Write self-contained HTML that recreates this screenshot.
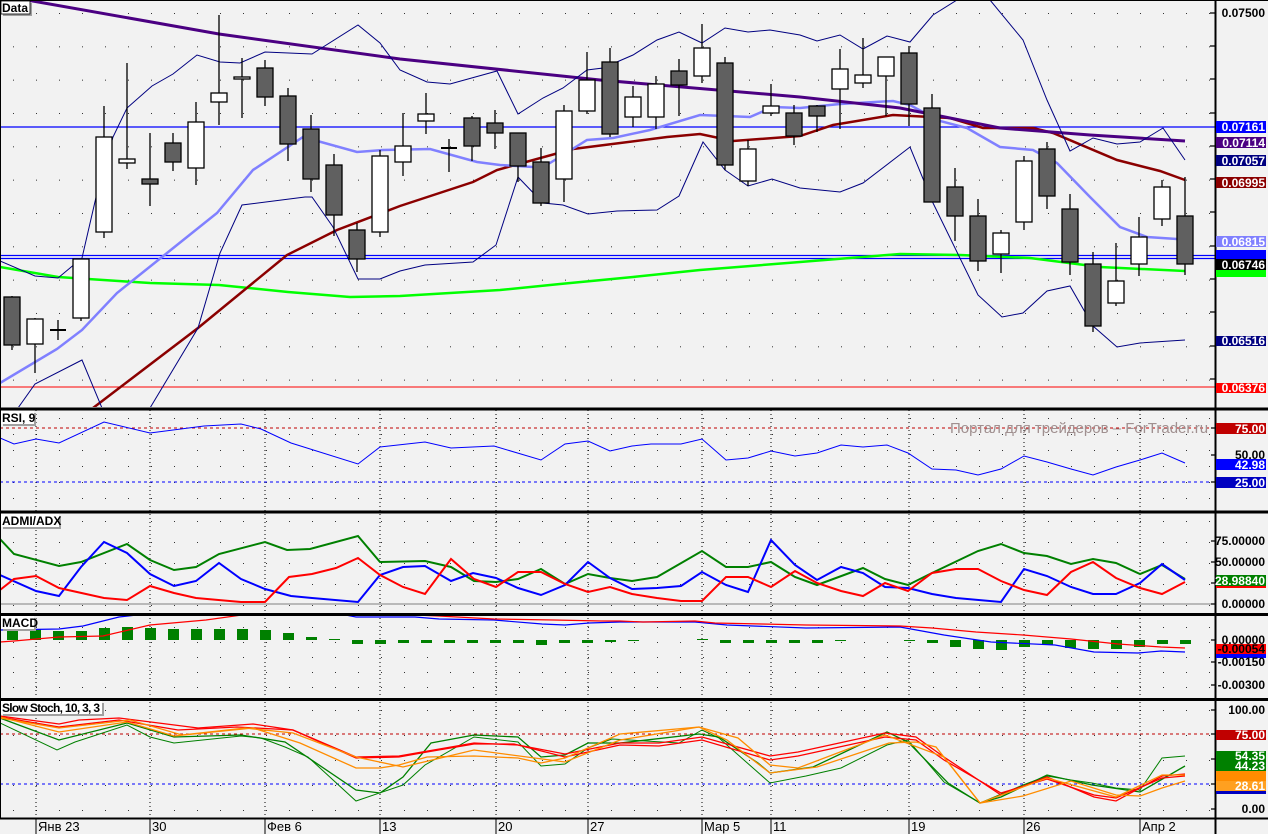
<!DOCTYPE html>
<html><head><meta charset="utf-8"><style>
html,body{margin:0;padding:0;background:#f2f2f2;}
svg{display:block;}
.ax{font-family:"Liberation Sans",sans-serif;font-size:12px;font-weight:bold;}
.lb{font-family:"Liberation Sans",sans-serif;font-size:12px;font-weight:bold;fill:#fff;}
.pl{font-family:"Liberation Sans",sans-serif;font-size:12px;font-weight:bold;fill:#000;}
.tl{font-family:"Liberation Sans","DejaVu Sans",sans-serif;font-size:13px;fill:#000;}
</style></head><body>
<svg width="1268" height="834" viewBox="0 0 1268 834" xmlns="http://www.w3.org/2000/svg">
<defs>
<pattern id="dm" x="13" y="13" width="23" height="33.33" patternUnits="userSpaceOnUse"><rect width="1" height="1" fill="#333"/></pattern>
<pattern id="dr" x="13" y="418" width="23" height="16" patternUnits="userSpaceOnUse"><rect width="1" height="1" fill="#333"/></pattern>
<pattern id="da" x="13" y="521" width="23" height="21" patternUnits="userSpaceOnUse"><rect width="1" height="1" fill="#333"/></pattern>
<pattern id="dc" x="13" y="627" width="23" height="15" patternUnits="userSpaceOnUse"><rect width="1" height="1" fill="#333"/></pattern>
<pattern id="ds" x="13" y="710" width="23" height="25" patternUnits="userSpaceOnUse"><rect width="1" height="1" fill="#333"/></pattern>
<clipPath id="cm"><rect x="0" y="0" width="1215" height="407"/></clipPath>
<clipPath id="cr"><rect x="0" y="410" width="1215" height="100"/></clipPath>
<clipPath id="ca"><rect x="0" y="513" width="1215" height="100"/></clipPath>
<clipPath id="cc"><rect x="0" y="616" width="1215" height="82"/></clipPath>
<clipPath id="cs"><rect x="0" y="701" width="1215" height="116"/></clipPath>
</defs>
<rect width="1268" height="834" fill="#f2f2f2"/>
<rect x="0" y="0" width="1215" height="407" fill="url(#dm)"/>
<rect x="0" y="410" width="1215" height="100" fill="url(#dr)"/>
<rect x="0" y="513" width="1215" height="100" fill="url(#da)"/>
<rect x="0" y="616" width="1215" height="82" fill="url(#dc)"/>
<rect x="0" y="701" width="1215" height="116" fill="url(#ds)"/>

<g stroke="#000" stroke-width="1" stroke-dasharray="1,3">
<path d="M36 410V818M150 410V818M265 410V818M380 410V818M496 410V818M588 410V818M702 410V818M771 410V818M909 410V818M1024 410V818M1140 410V818"/>
</g>

<!-- MAIN -->
<g clip-path="url(#cm)">
<path d="M0 127H1215" stroke="#0000ff" stroke-width="1.3"/>
<path d="M0 255.5H1215M0 258.5H1215" stroke="#0000ff" stroke-width="1.3"/>
<path d="M0 387H1215" stroke="#ff0000" stroke-width="1"/>
<polyline fill="none" stroke="#00ff00" stroke-width="2.5" points="0,267 58,277 150,283 219,285 288,292 350,297 400,296 500,290 560,284 633,277 700,270 800,262 900,254 960,255 1030,258 1100,267 1185,271"/>
<polyline fill="none" stroke="#8b0000" stroke-width="2.5" points="93,408 198,328 287,255 337,230 400,206 473,182 497,170 573,149 667,137 700,134 733,141 800,136 833,125 893,115 950,118 983,128 1033,128 1053,133 1117,160 1160,171 1185,180"/>
<polyline fill="none" stroke="#8080ff" stroke-width="2.5" points="0,383 57,349 82,330 117,293 167,253 217,213 253,170 303,137 357,152 383,150 430,149 477,162 500,165 533,167 550,163 587,140 613,138 650,130 700,115 750,117 773,107 800,108 840,104 893,101 910,105 940,121 967,128 1000,147 1033,150 1057,163 1090,197 1120,227 1147,237 1177,239"/>
<polyline fill="none" stroke="#4b0082" stroke-width="3" points="27,0 219,34 400,59 600,80 800,97 900,108 1000,128 1090,135 1185,141"/>
<polyline fill="none" stroke="#000080" stroke-width="1" points="0,261 35,276 58,278 82,258 97,193 113,137 127,108 152,86 173,74 197,55 220,62 240,63 265,52 312,54 358,25 380,43 400,70 427,82 450,84 497,71 518,114 543,98 563,88 587,70 603,68 633,55 657,40 679,32 702,43 725,28 748,32 770,30 800,35 817,41 840,35 863,49 887,36 910,42 933,15 957,0 975,-6 990,0 1023,40 1047,100 1070,151 1093,138 1117,144 1140,142 1163,128 1185,160"/>
<polyline fill="none" stroke="#000080" stroke-width="1" points="18,408 35,384 82,360 102,408 150,408 198,328 220,253 242,205 305,197 312,197 333,227 358,279 380,279 400,271 425,265 473,262 496,245 518,177 543,203 563,205 588,214 617,211 657,210 679,196 703,142 725,170 748,186 772,179 800,188 840,192 863,183 910,147 933,203 978,295 1002,317 1023,313 1047,291 1070,286 1093,326 1117,347 1140,343 1185,340"/>
<g stroke="#000" stroke-width="1.3">
<path d="M12 296V350M35 318V373M58 320V340M81 259V321M104 106V238M127 63V169M150 133V206M173 133V171M196 102V185M219 15V125M242 58V118M265 60V106M288 88V161M311 115V192M334 154V236M357 223V272M380 150V237M403 113V176M426 93V134M449 139V172M472 116V161M495 110V149M518 133V182M541 148V206M564 105V202M587 52V114M610 48V137M633 86V127M656 76V129M679 59V116M702 24V83M725 57V170M748 140V186M771 84V116M794 105V145M817 105V132M840 49V129M863 38V88M886 57V116M909 46V126M932 94V202M955 168V241M978 199V271M1001 230V273M1024 156V230M1047 142V209M1070 194V275M1093 252V332M1116 243V306M1139 217V276M1162 180V226M1185 177V275"/>
<path d="M50 330H66M441 148H457" stroke-width="2"/>
</g>
<g stroke="#000" stroke-width="1.3">
<g fill="#606060">
<rect x="4" y="297" width="16" height="48"/><rect x="142" y="179" width="16" height="5"/><rect x="165" y="143" width="16" height="19"/>
<rect x="257" y="68" width="16" height="29"/><rect x="280" y="96" width="16" height="48"/><rect x="303" y="129" width="16" height="50"/>
<rect x="326" y="165" width="16" height="50"/><rect x="349" y="230" width="16" height="29"/><rect x="464" y="118" width="16" height="28"/>
<rect x="487" y="123" width="16" height="10"/><rect x="510" y="133" width="16" height="33"/><rect x="533" y="162" width="16" height="41"/>
<rect x="602" y="62" width="16" height="72"/><rect x="671" y="71" width="16" height="14"/><rect x="717" y="63" width="16" height="102"/>
<rect x="786" y="113" width="16" height="23"/><rect x="809" y="106" width="16" height="10"/><rect x="901" y="53" width="16" height="51"/>
<rect x="924" y="108" width="16" height="94"/><rect x="947" y="187" width="16" height="29"/><rect x="970" y="216" width="16" height="45"/>
<rect x="1039" y="149" width="16" height="47"/><rect x="1062" y="209" width="16" height="53"/><rect x="1085" y="264" width="16" height="62"/>
<rect x="1177" y="216" width="16" height="48"/>
</g>
<g fill="#fff">
<rect x="27" y="319" width="16" height="25"/><rect x="73" y="259" width="16" height="59"/><rect x="96" y="137" width="16" height="95"/>
<rect x="119" y="159" width="16" height="4"/><rect x="188" y="122" width="16" height="46"/><rect x="211" y="93" width="16" height="9"/>
<rect x="234" y="77" width="16" height="2"/><rect x="372" y="156" width="16" height="76"/><rect x="395" y="146" width="16" height="16"/>
<rect x="418" y="114" width="16" height="7"/><rect x="556" y="111" width="16" height="68"/><rect x="579" y="80" width="16" height="31"/>
<rect x="625" y="97" width="16" height="20"/><rect x="648" y="84" width="16" height="33"/><rect x="694" y="48" width="16" height="28"/>
<rect x="740" y="149" width="16" height="32"/><rect x="763" y="106" width="16" height="7"/><rect x="832" y="69" width="16" height="20"/>
<rect x="855" y="75" width="16" height="8"/><rect x="878" y="57" width="16" height="19"/><rect x="993" y="233" width="16" height="21"/>
<rect x="1016" y="161" width="16" height="61"/><rect x="1108" y="281" width="16" height="22"/><rect x="1131" y="237" width="16" height="27"/>
<rect x="1154" y="187" width="16" height="32"/>
</g>
</g>
</g>

<!-- RSI -->
<g clip-path="url(#cr)">
<path d="M0 428H1215" stroke="#c00000" stroke-dasharray="3,3"/>
<path d="M0 482H1215" stroke="#0000ff" stroke-dasharray="3,3"/>
<text x="950" y="433" font-family="Liberation Sans, DejaVu Sans, sans-serif" font-size="15" fill="#a09090">Портал для трейдеров – ForTrader.ru</text>
<polyline fill="none" stroke="#0000ff" stroke-width="1" points="0,438 14,444 36,439 59,443 104,422 150,433 204,426 241,424 261,429 291,443 358,464 380,447 425,442 451,448 494,446 541,460 565,444 588,441 610,451 632,446 651,444 681,444 702,439 726,460 748,458 771,451 795,456 817,453 841,445 863,447 887,445 908,453 932,469 956,470 978,475 1001,469 1024,456 1047,462 1071,469 1093,475 1116,467 1140,460 1162,453 1185,463"/>
</g>

<!-- ADX -->
<g clip-path="url(#ca)">
<path d="M0 604H1215" stroke="#808080" stroke-width="1"/>
<polyline fill="none" stroke="#008000" stroke-width="2" points="0,539 14,554 59,566 81,562 127,544 150,560 174,570 196,567 219,554 265,542 287,550 310,549 358,536 380,562 425,561 451,567 474,581 496,582 518,579 541,569 565,584 588,574 610,578 632,581 657,577 702,551 726,567 748,567 771,562 795,577 817,585 863,568 885,579 908,585 932,573 978,551 1001,544 1024,553 1047,556 1071,564 1093,559 1116,563 1140,574 1162,565 1185,579"/>
<polyline fill="none" stroke="#0000ff" stroke-width="2" points="0,575 36,591 59,596 81,567 104,542 127,553 150,574 174,586 196,581 219,563 241,579 265,589 291,596 312,598 358,602 380,575 403,567 425,566 451,581 473,573 496,578 518,588 541,595 565,585 588,562 610,578 632,589 657,588 681,586 702,572 726,585 748,592 771,540 795,565 817,580 841,567 863,573 885,587 908,588 932,594 956,598 1001,602 1024,569 1047,576 1071,587 1093,594 1116,594 1140,583 1162,564 1185,580"/>
<polyline fill="none" stroke="#ff0000" stroke-width="2" points="0,590 14,579 36,576 59,588 104,598 127,600 150,586 174,593 196,598 241,602 265,602 289,577 312,574 336,568 358,558 380,575 403,587 425,594 451,559 474,579 496,587 518,572 541,572 565,584 588,592 610,587 632,594 657,598 681,601 702,601 726,577 748,577 771,587 795,571 817,583 841,591 863,596 885,583 908,591 932,573 956,569 978,569 1001,581 1024,590 1047,595 1071,572 1093,562 1116,578 1140,588 1162,594 1185,582"/>
</g>

<!-- MACD -->
<g clip-path="url(#cc)">
<g fill="#008000">
<rect x="7" y="629" width="11" height="11"/><rect x="30" y="629" width="11" height="11"/><rect x="53" y="631" width="11" height="9"/><rect x="76" y="631" width="11" height="9"/>
<rect x="99" y="628" width="11" height="12"/><rect x="122" y="627" width="11" height="13"/><rect x="145" y="628" width="11" height="12"/><rect x="168" y="629" width="11" height="11"/>
<rect x="191" y="629" width="11" height="11"/><rect x="214" y="629" width="11" height="11"/><rect x="237" y="629" width="11" height="11"/><rect x="260" y="630" width="11" height="10"/>
<rect x="283" y="633" width="11" height="7"/><rect x="306" y="637" width="11" height="3"/><rect x="329" y="639" width="11" height="1"/>
<rect x="352" y="640" width="11" height="4"/><rect x="375" y="640" width="11" height="4"/><rect x="398" y="640" width="11" height="3"/><rect x="421" y="640" width="11" height="3"/>
<rect x="444" y="640" width="11" height="3"/><rect x="467" y="640" width="11" height="3"/><rect x="490" y="640" width="11" height="3"/><rect x="513" y="640" width="11" height="3"/>
<rect x="536" y="640" width="11" height="5"/><rect x="559" y="640" width="11" height="3"/><rect x="582" y="640" width="11" height="3"/><rect x="605" y="640" width="11" height="2"/>
<rect x="628" y="640" width="11" height="1"/><rect x="697" y="639" width="11" height="1"/><rect x="720" y="640" width="11" height="3"/><rect x="743" y="640" width="11" height="3"/>
<rect x="766" y="640" width="11" height="3"/><rect x="789" y="640" width="11" height="3"/><rect x="812" y="640" width="11" height="3"/><rect x="835" y="640" width="11" height="1"/>
<rect x="904" y="640" width="11" height="1"/><rect x="927" y="640" width="11" height="3"/><rect x="950" y="640" width="11" height="7"/><rect x="973" y="640" width="11" height="9"/>
<rect x="996" y="640" width="11" height="10"/><rect x="1019" y="640" width="11" height="7"/><rect x="1042" y="640" width="11" height="5"/><rect x="1065" y="640" width="11" height="8"/>
<rect x="1088" y="640" width="11" height="9"/><rect x="1111" y="640" width="11" height="9"/><rect x="1134" y="640" width="11" height="7"/><rect x="1157" y="640" width="11" height="4"/>
<rect x="1180" y="640" width="11" height="4"/>
</g>
<polyline fill="none" stroke="#0000ff" stroke-width="1.2" points="0,630 59,629 83,626 119,617 146,614 160,612 330,612 356,617 415,617 439,619 494,620 542,624 565,625 589,623 620,622 695,622 727,625 806,628 900,627 944,635 991,642 1055,645 1094,652 1138,653 1161,651 1185,652"/>
<polyline fill="none" stroke="#ff0000" stroke-width="1.2" points="0,642 14,641 59,637 103,636 150,625 206,620 249,614 260,612 380,612 415,615 439,616 494,619 554,620 601,621 620,621 643,622 695,621 715,623 762,624 806,625 900,626 932,628 976,632 1023,635 1071,639 1118,644 1161,647 1185,648"/>
</g>

<!-- STOCH -->
<g clip-path="url(#cs)">
<path d="M0 734H1215" stroke="#c00000" stroke-dasharray="3,3"/>
<path d="M0 784H1215" stroke="#0000ff" stroke-dasharray="3,3"/>
<polyline fill="none" stroke="#008000" stroke-width="1" points="0,723 57,750 75,742 127,725 150,737 174,743 241,736 261,738 285,747 308,757 356,801 403,785 425,765 474,737 518,742 541,766 565,764 588,748 609,740 612,739 679,743 702,730 719,738 770,783 806,776 841,768 887,745 908,740 944,782 980,803 1023,785 1047,776 1071,780 1092,783 1116,788 1140,790 1162,758 1185,756"/>
<polyline fill="none" stroke="#008000" stroke-width="1.3" points="0,718 59,740 127,723 174,737 241,735 285,742 356,790 380,793 403,777 431,743 474,735 518,737 541,757 565,755 588,743 620,743 699,734 719,737 758,763 770,773 813,767 887,732 908,742 948,783 980,803 1001,797 1047,775 1092,785 1140,792 1185,766"/>
<polyline fill="none" stroke="#ff0000" stroke-width="1.3" points="0,716 59,724 79,720 119,718 198,728 253,724 293,730 356,757 399,756 474,743 518,745 565,754 620,743 659,743 702,737 770,756 798,752 885,733 916,737 944,757 1001,795 1047,777 1094,797 1116,801 1162,776 1185,774"/>
<polyline fill="none" stroke="#ff0000" stroke-width="1.3" points="0,717 59,727 119,720 178,730 237,727 293,730 356,758 399,757 427,752 474,744 514,744 565,757 620,745 659,746 702,740 770,760 798,756 885,737 916,740 944,760 1001,793 1047,779 1094,795 1116,798 1162,778 1185,776"/>
<polyline fill="none" stroke="#ff8c00" stroke-width="1.3" points="0,717 59,732 127,722 174,736 253,728 300,743 356,768 380,768 399,765 427,757 474,756 518,758 541,763 565,758 620,734 699,727 727,740 770,773 817,767 889,743 916,742 936,747 980,803 1023,796 1071,781 1116,795 1140,796 1162,788 1185,781"/>
<polyline fill="none" stroke="#ff8c00" stroke-width="1.3" points="0,718 59,728 130,720 182,735 245,728 293,733 356,757 403,767 474,750 565,762 620,740 699,727 738,738 770,765 798,768 885,735 944,757 980,803 1047,778 1116,797 1162,775 1185,775"/>
</g>

<!-- frame -->
<g stroke="#000">
<path d="M0 0.5H1268M0.5 0V818" stroke-width="1"/>
<path d="M1215.5 0V834" stroke-width="2"/>
<path d="M0 409H1268M0 512H1268M0 614.5H1268M0 699.5H1268" stroke-width="3"/>
<path d="M0 818.5H1268" stroke-width="2"/>
<path d="M36 818V834M150 818V834M265 818V834M380 818V834M496 818V834M588 818V834M702 818V834M771 818V834M909 818V834M1024 818V834M1140 818V834" stroke-width="1"/>
<path d="M1210 13H1215M1210 46H1215M1210 79H1215M1210 113H1215M1210 146H1215M1210 179H1215M1210 212H1215M1210 246H1215M1210 279H1215M1210 312H1215M1210 346H1215M1210 379H1215" stroke-width="1.3"/>
<path d="M1211 428H1215M1211 455H1215M1211 482H1215M1211 541H1215M1211 562H1215M1211 583H1215M1211 604H1215M1211 640H1215M1211 662H1215M1211 685H1215M1211 710H1215M1211 734H1215M1211 759H1215M1211 784H1215M1211 809H1215" stroke-width="1.3"/>
</g>

<!-- panel labels -->
<g>
<rect x="3" y="3" width="29" height="13" fill="#a0a0a0"/><rect x="1" y="1" width="29" height="13" fill="#fff" stroke="#000" stroke-width="0.8"/>
<text x="2" y="12" class="pl">Data</text>
<rect x="3" y="413" width="33" height="13" fill="#a0a0a0"/><rect x="1" y="411" width="33" height="13" fill="#fff"/>
<text x="2" y="422" class="pl">RSI, 9</text>
<rect x="3" y="516" width="58" height="13" fill="#a0a0a0"/><rect x="1" y="514" width="58" height="13" fill="#fff"/>
<text x="2" y="525" class="pl">ADMI/ADX</text>
<rect x="3" y="618" width="33" height="13" fill="#a0a0a0"/><rect x="1" y="616" width="33" height="13" fill="#fff"/>
<text x="2" y="627" class="pl">MACD</text>
<rect x="3" y="703" width="101" height="13" fill="#a0a0a0"/><rect x="1" y="701" width="101" height="13" fill="#fff"/>
<text x="2" y="712" class="pl" textLength="98">Slow Stoch, 10, 3, 3</text>
</g>

<!-- right axis -->
<g class="ax" text-anchor="end">
<text x="1265" y="17" fill="#000">0.07500</text>
<rect x="1216" y="121" width="50" height="12" fill="#0000ff"/><text x="1265" y="131" class="lb">0.07161</text>
<rect x="1216" y="137" width="50" height="11" fill="#4b0082"/><text x="1265" y="147" class="lb">0.07114</text>
<rect x="1216" y="155" width="50" height="11" fill="#000080"/><text x="1265" y="165" class="lb">0.07057</text>
<rect x="1216" y="177" width="50" height="11" fill="#8b0000"/><text x="1265" y="187" class="lb">0.06995</text>
<rect x="1216" y="236" width="50" height="11" fill="#8080ff"/><text x="1265" y="246" class="lb">0.06815</text>
<rect x="1216" y="250" width="50" height="9" fill="#0000ff"/>
<rect x="1216" y="259" width="50" height="11" fill="#000"/><text x="1265" y="269" class="lb">0.06746</text>
<rect x="1216" y="270" width="50" height="7" fill="#00ff00"/>
<rect x="1216" y="336" width="50" height="10" fill="#000080"/><text x="1265" y="345" class="lb">0.06516</text>
<rect x="1216" y="383" width="50" height="10" fill="#ff0000"/><text x="1265" y="392" class="lb">0.06376</text>

<rect x="1216" y="423" width="50" height="11" fill="#c00000"/><text x="1265" y="433" class="lb">75.00</text>
<text x="1265" y="459" fill="#000">50.00</text>
<rect x="1216" y="459" width="50" height="11" fill="#0000ff"/><text x="1265" y="469" class="lb">42.98</text>
<rect x="1216" y="477" width="50" height="11" fill="#0000c0"/><text x="1265" y="487" class="lb">25.00</text>

<text x="1265" y="545" fill="#000">75.00000</text>
<text x="1265" y="566" fill="#000">50.00000</text>
<rect x="1216" y="575" width="50" height="11" fill="#008000"/><text x="1265" y="585" class="lb">28.98840</text>
<rect x="1216" y="586" width="50" height="2" fill="#ff0000"/>
<text x="1265" y="608" fill="#000">0.00000</text>

<text x="1265" y="644" fill="#000">0.00000</text>
<rect x="1216" y="644" width="50" height="10" fill="#ff0000"/><text x="1265" y="653" class="lb" style="fill:#000">-0.00054</text>
<rect x="1216" y="654" width="50" height="4" fill="#0000ff"/>
<text x="1265" y="666" fill="#000">-0.00150</text>
<text x="1265" y="689" fill="#000">-0.00300</text>

<text x="1265" y="714" fill="#000">100.00</text>
<rect x="1216" y="730" width="50" height="10" fill="#c00000"/><text x="1265" y="739" class="lb">75.00</text>
<rect x="1216" y="751" width="50" height="10" fill="#008000"/><text x="1265" y="760" class="lb">54.35</text>
<rect x="1216" y="761" width="50" height="10" fill="#008000"/><text x="1265" y="770" class="lb">44.23</text>
<rect x="1216" y="771" width="50" height="10" fill="#ff8c00"/>
<rect x="1216" y="781" width="50" height="10" fill="#ffa020"/><text x="1265" y="790" class="lb">28.61</text>
<rect x="1216" y="791" width="50" height="3" fill="#0000c0"/>
<text x="1265" y="813" fill="#000">0.00</text>
</g>

<!-- bottom labels -->
<g class="tl">
<text x="38" y="831">Янв 23</text>
<text x="152" y="831">30</text>
<text x="267" y="831">Фев 6</text>
<text x="382" y="831">13</text>
<text x="498" y="831">20</text>
<text x="590" y="831">27</text>
<text x="704" y="831">Мар 5</text>
<text x="773" y="831">11</text>
<text x="911" y="831">19</text>
<text x="1026" y="831">26</text>
<text x="1142" y="831">Апр 2</text>
</g>
</svg>
</body></html>
